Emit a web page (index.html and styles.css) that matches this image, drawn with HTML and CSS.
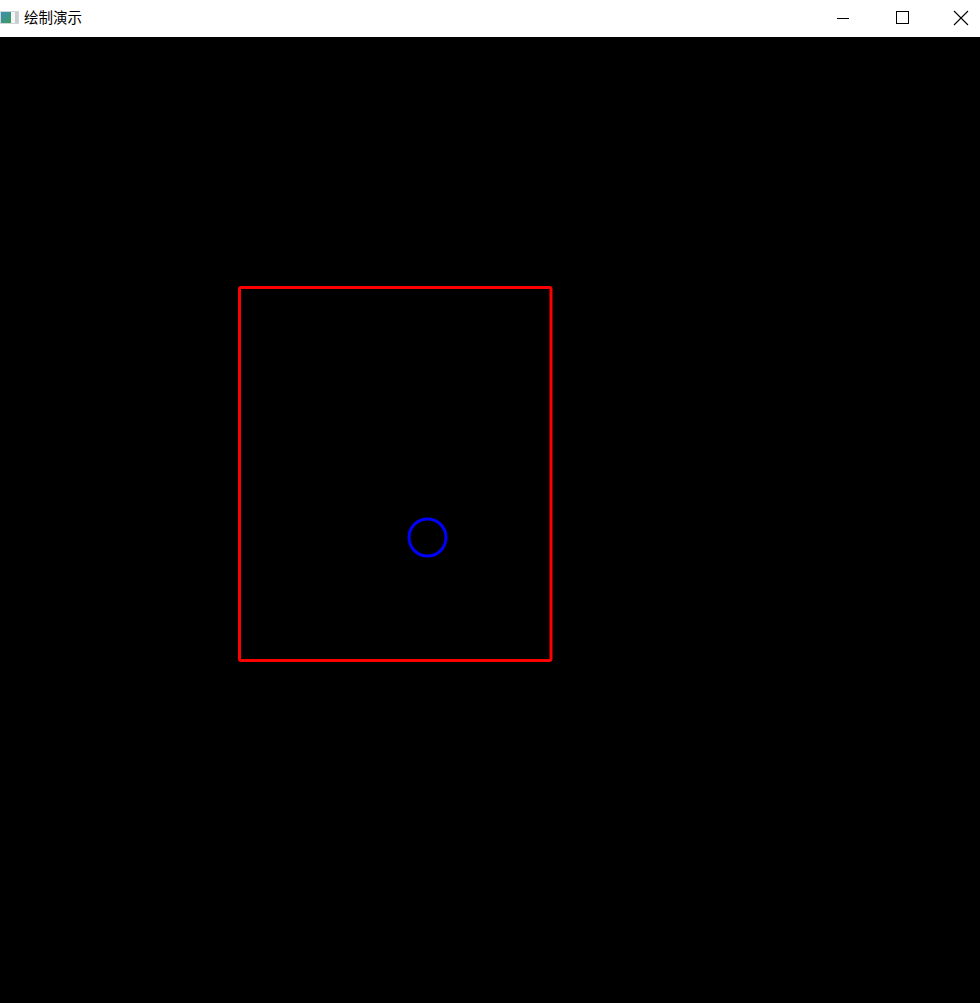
FILE: index.html
```html
<!DOCTYPE html>
<html lang="zh">
<head>
<meta charset="utf-8">
<title>绘制演示</title>
<link rel="stylesheet" href="styles.css">
</head>
<body>
<div class="window">
  <div class="titlebar">
    <div class="title-left">
      <svg class="app-icon" width="19" height="13" viewBox="0 0 19 13">
        <defs>
          <linearGradient id="g" x1="0" y1="0" x2="1" y2="1">
            <stop offset="0" stop-color="#3a8fb8"/>
            <stop offset="1" stop-color="#3f9a5a"/>
          </linearGradient>
        </defs>
        <rect x="0" y="0" width="19" height="13" fill="#d0d6d6"/>
        <rect x="1" y="1" width="10" height="11" fill="url(#g)"/>
        <rect x="11" y="1" width="4" height="11" fill="#f4f6f6"/>
        <rect x="15" y="1" width="3" height="11" fill="#c8cccc"/>
      </svg>
      <span class="title">绘制演示</span>
    </div>
    <div class="controls">
      <div class="ctl">
        <svg width="14" height="14" viewBox="0 0 14 14"><path d="M1 7.5 H13" stroke="#000" stroke-width="1"/></svg>
      </div>
      <div class="ctl">
        <svg width="14" height="14" viewBox="0 0 14 14"><rect x="1.5" y="0.5" width="12" height="12" fill="none" stroke="#000" stroke-width="1"/></svg>
      </div>
      <div class="ctl">
        <svg width="16" height="16" viewBox="0 0 16 16"><path d="M1 1 L15 15 M15 1 L1 15" stroke="#000" stroke-width="1.1"/></svg>
      </div>
    </div>
  </div>
  <div class="canvas">
    <svg width="980" height="966" viewBox="0 37 980 966">
      <rect x="239.5" y="287.5" width="311.5" height="373" fill="none" stroke="#ff0000" stroke-width="3" rx="1.5"/>
      <circle cx="427.5" cy="537.5" r="18.5" fill="none" stroke="#0000ff" stroke-width="3"/>
    </svg>
  </div>
</div>
</body>
</html>
```

FILE: styles.css
```css
html, body {
  margin: 0;
  padding: 0;
  background: #000;
}
.window {
  width: 980px;
  height: 1003px;
  display: flex;
  flex-direction: column;
  overflow: hidden;
}
.titlebar {
  height: 37px;
  flex: none;
  background: #fff;
  display: flex;
  align-items: center;
  justify-content: space-between;
  overflow: hidden;
}
.title-left {
  display: flex;
  align-items: center;
  gap: 5px;
}
.app-icon {
  display: block;
  margin-top: -2px;
}
.title {
  font-family: "Noto Sans CJK SC", "Noto Sans", sans-serif;
  font-size: 14.5px;
  color: #000;
  line-height: 1;
  margin-top: -2px;
}
.controls {
  display: flex;
  height: 100%;
  margin-right: -10px;
}
.ctl {
  width: 59px;
  display: flex;
  align-items: center;
  justify-content: center;
  padding-bottom: 2px;
}
.ctl svg {
  display: block;
}
.canvas {
  flex: 1;
  background: #000;
}
.canvas svg {
  display: block;
}
```
